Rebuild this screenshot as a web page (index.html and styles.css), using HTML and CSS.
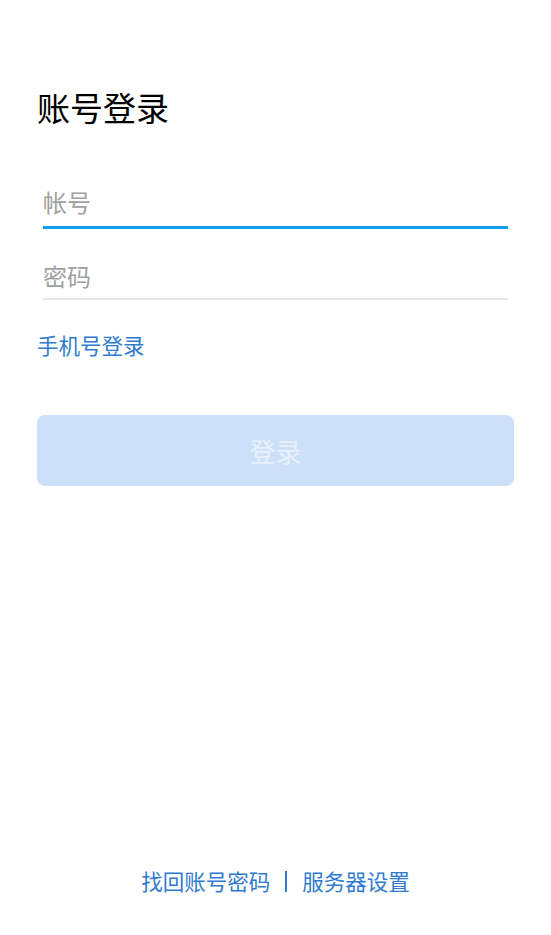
FILE: index.html
```html
<!DOCTYPE html>
<html lang="zh-CN">
<head>
    <meta charset="UTF-8">
    <meta name="viewport" content="width=device-width, initial-scale=1.0">
    <title>账号登录</title>
    <link rel="stylesheet" href="styles.css">
</head>
<body>
    <div class="page">
        <h1 class="title">账号登录</h1>

        <!-- Login form -->
        <div class="form">
            <input class="field active" type="text" placeholder="帐号">
            <input class="field" type="password" placeholder="密码">
        </div>

        <a class="switch-link" href="#">手机号登录</a>

        <button class="login-btn" disabled>登录</button>

        <!-- Footer links -->
        <div class="footer">
            <a href="#">找回账号密码</a>
            <span class="sep"></span>
            <a href="#">服务器设置</a>
        </div>
    </div>
</body>
</html>
```

FILE: styles.css
```css
html, body {
    margin: 0;
    padding: 0;
    background: #fff;
}
body {
    font-family: "Noto Sans CJK SC", "Noto Sans", sans-serif;
}
.page {
    min-height: 935px;
    box-sizing: border-box;
    padding: 0 37px;
    display: flex;
    flex-direction: column;
}
.title {
    margin: 87px 0 0 0;
    font-size: 33px;
    line-height: 40px;
    font-weight: normal;
    color: #000;
}
.form {
    margin: 0 6px;
    padding-top: 28px;
}
.field {
    display: block;
    width: 100%;
    box-sizing: border-box;
    margin: 0;
    padding: 33px 0 8px 0;
    border: none;
    border-bottom: 2px solid #e6e6e6;
    outline: none;
    font-family: inherit;
    font-size: 24px;
    line-height: 28px;
    color: #333;
    background: transparent;
}
.field::placeholder {
    color: #a0a0a0;
}
.field.active {
    padding-bottom: 10px;
    border-bottom: 3px solid #0ea0f0;
}
.switch-link {
    align-self: flex-start;
    margin-top: 32px;
    font-size: 21.5px;
    line-height: 26px;
    color: #2f7bd1;
    text-decoration: none;
}
.login-btn {
    margin-top: 57px;
    height: 71px;
    border: none;
    border-radius: 8px;
    background: #cce0f9;
    color: #e9f1fc;
    font-family: inherit;
    font-size: 26px;
}
.footer {
    margin-top: auto;
    margin-bottom: 40px;
    display: flex;
    justify-content: center;
    align-items: center;
    gap: 15px;
    font-size: 21.5px;
    line-height: 28px;
}
.footer a {
    color: #2f7bd1;
    text-decoration: none;
}
.sep {
    width: 2px;
    height: 21px;
    background: #2f7bd1;
}
```
